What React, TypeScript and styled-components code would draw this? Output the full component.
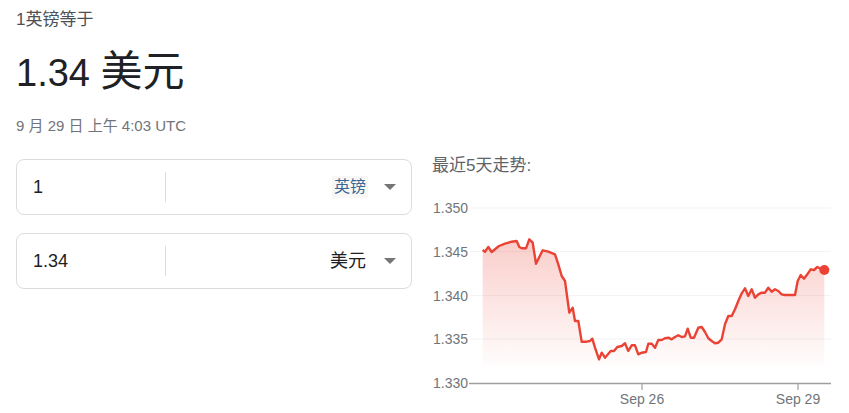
import React from 'react';
import styled, { createGlobalStyle } from 'styled-components';

const GlobalStyle = createGlobalStyle`
    html, body {
        margin: 0;
        padding: 0;
        background: #ffffff;
        overflow: hidden;
    }
    body {
        font-family: Arial, 'Liberation Sans', 'Noto Sans CJK SC', sans-serif;
        color: #202124;
    }
`;

// line points read off the reference chart (page px)
const rawPoints: [number, number][] = [
    [188, 297], [195, 302], [205, 288], [215, 303], [225, 295], [237, 285], [255, 278], [275, 272],
    [290, 270], [298, 288], [305, 292], [318, 292], [328, 265], [338, 275], [348, 338], [358, 318],
    [368, 298], [385, 302], [405, 310], [415, 340], [425, 375], [435, 390], [448, 485], [458, 470],
    [465, 510], [475, 510], [485, 572], [500, 572], [510, 570], [517, 563], [525, 590], [537, 625],
    [545, 605], [555, 620], [562, 612], [572, 600], [582, 600], [592, 588], [605, 585], [615, 577],
    [625, 600], [635, 583], [645, 583], [655, 610], [665, 605], [678, 603], [685, 578], [695, 578],
    [705, 590], [715, 567], [725, 567], [735, 562], [745, 560], [755, 565], [765, 558], [775, 553],
    [785, 558], [795, 556], [803, 533], [812, 560], [822, 560], [835, 530], [845, 528], [855, 543],
    [865, 562], [875, 570], [885, 577], [895, 575], [905, 565], [915, 520], [925, 495], [935, 495],
    [945, 475], [955, 450], [965, 427], [975, 412], [985, 435], [995, 415], [1005, 440], [1015, 430],
    [1025, 425], [1035, 425], [1045, 410], [1055, 422], [1065, 415], [1075, 420], [1085, 430],
    [1095, 432], [1110, 432], [1125, 432], [1133, 390], [1142, 372], [1152, 383], [1162, 370],
    [1172, 355], [1182, 357], [1192, 348], [1200, 352], [1213, 357],
];

const points = rawPoints.map(([x, y]) => [420 + x / 3, 150 + y / 3] as [number, number]);

const yTicks = [
    { label: '1.350', y: 207 },
    { label: '1.345', y: 250.5 },
    { label: '1.340', y: 294.5 },
    { label: '1.335', y: 338 },
];

const xTicks = [
    { label: 'Sep 26', x: 642 },
    { label: 'Sep 29', x: 798 },
];

const Page = styled.div`
    padding: 10px 0 0 16px;
`;

const Caption = styled.div`
    font-size: 17px;
    line-height: 20px;
    color: #4d5156;
`;

const BigValue = styled.div`
    margin-top: 18px;
    font-size: 38px;
    line-height: 48px;
    color: #202124;
`;

const BigUnit = styled.span`
    font-size: 42px;
`;

const Stamp = styled.div`
    margin-top: 19px;
    font-size: 15px;
    line-height: 20px;
    color: #70757a;
`;

const Columns = styled.div`
    margin-top: 20px;
    display: flex;
    gap: 20px;
`;

const Converter = styled.div`
    flex: 0 0 396px;
    display: flex;
    flex-direction: column;
    gap: 18px;
    padding-top: 3px;
`;

const Field = styled.div`
    height: 54px;
    border: 1px solid #dadce0;
    border-radius: 8px;
    display: flex;
    align-items: center;
`;

const Amount = styled.div`
    width: 132px;
    padding-left: 16px;
    font-size: 18px;
    color: #202124;
`;

const Divider = styled.div`
    width: 1px;
    height: 30px;
    background: #dadce0;
`;

const Unit = styled.div`
    flex: 1;
    display: flex;
    align-items: center;
    justify-content: flex-end;
    gap: 12px;
    padding-right: 15px;
`;

const UnitName = styled.span<{ $accent?: boolean }>`
    font-size: ${({ $accent }) => ($accent ? '16px' : '18px')};
    line-height: 22px;
    padding: 0 2px;
    color: ${({ $accent }) => ($accent ? '#3a6796' : '#202124')};
    background: ${({ $accent }) => ($accent ? '#f7f8f6' : 'transparent')};
`;

const Caret = styled.span`
    width: 0;
    height: 0;
    border-left: 6px solid transparent;
    border-right: 6px solid transparent;
    border-top: 6px solid #757575;
    margin-left: 4px;
`;

const Trend = styled.div`
    flex: 0 0 410px;
    margin-left: -4px;
    display: flex;
    flex-direction: column;
`;

const TrendTitle = styled.div`
    padding-left: 4px;
    font-size: 17px;
    line-height: 20px;
    color: #5f6368;
`;

const ChartSvg = styled.svg`
    display: block;
    margin-top: 3px;
    font-family: Arial, 'Liberation Sans', sans-serif;
`;

function TrendChart() {
    const line = points.map(([x, y], i) => `${i ? 'L' : 'M'}${x.toFixed(1)} ${y.toFixed(1)}`).join(' ');
    const first = points[0];
    const last = points[points.length - 1];
    const area = `${line} L${last[0].toFixed(1)} 365 L${first[0].toFixed(1)} 365 Z`;

    return (
        <ChartSvg width={410} height={235} viewBox='428 178 410 235'>
            <defs>
                <linearGradient id='fade' x1='0' y1='240' x2='0' y2='366' gradientUnits='userSpaceOnUse'>
                    <stop offset='0' stopColor='#ea4335' stopOpacity='0.26' />
                    <stop offset='1' stopColor='#ea4335' stopOpacity='0.01' />
                </linearGradient>
            </defs>
            {yTicks.map((t) => (
                <line key={t.label} x1={470} x2={831} y1={t.y} y2={t.y} stroke='#f3f3f3' strokeWidth={1} />
            ))}
            {[...yTicks, { label: '1.330', y: 381.5 }].map((t) => (
                <text key={t.label} x={468} y={t.y + 5} textAnchor='end' fontSize={14} fill='#70757a'>
                    {t.label}
                </text>
            ))}
            <path d={area} fill='url(#fade)' />
            <path d={line} fill='none' stroke='#ea4335' strokeWidth={2.4} strokeLinejoin='round' />
            <circle cx={last[0]} cy={last[1]} r={5} fill='#ea4335' />
            <line x1={469} x2={831} y1={382.5} y2={382.5} stroke='#9e9e9e' strokeWidth={1.6} />
            {xTicks.map((t) => (
                <g key={t.label}>
                    <line x1={t.x} x2={t.x} y1={382} y2={389} stroke='#9e9e9e' strokeWidth={1.2} />
                    <text x={t.x} y={403} textAnchor='middle' fontSize={14} fill='#70757a'>
                        {t.label}
                    </text>
                </g>
            ))}
        </ChartSvg>
    );
}

export default function App() {
    return (
        <>
            <GlobalStyle />
            <Page>
                <Caption>1英镑等于</Caption>
                <BigValue>
                    1.34 <BigUnit>美元</BigUnit>
                </BigValue>
                <Stamp>9 月 29 日 上午 4:03 UTC</Stamp>
                <Columns>
                    <Converter>
                        <Field>
                            <Amount>1</Amount>
                            <Divider />
                            <Unit>
                                <UnitName $accent>英镑</UnitName>
                                <Caret />
                            </Unit>
                        </Field>
                        <Field>
                            <Amount>1.34</Amount>
                            <Divider />
                            <Unit>
                                <UnitName>美元</UnitName>
                                <Caret />
                            </Unit>
                        </Field>
                    </Converter>
                    <Trend>
                        <TrendTitle>最近5天走势:</TrendTitle>
                        <TrendChart />
                    </Trend>
                </Columns>
            </Page>
        </>
    );
}
